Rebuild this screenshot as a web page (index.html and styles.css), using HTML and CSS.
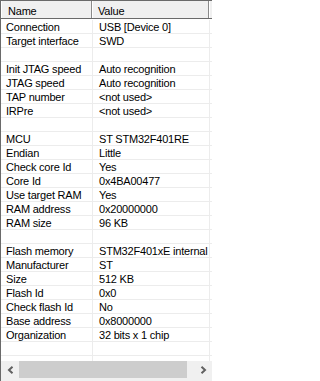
FILE: index.html
```html
<!DOCTYPE html>
<html>
<head>
<meta charset="utf-8">
<link rel="stylesheet" href="styles.css">
</head>
<body>
<div class="frame">
  <div class="table">
    <div class="head">
      <div class="hk">Name</div>
      <div class="hv">Value</div>
      <div class="hx"></div>
    </div>
    <div class="rows">
      <div class="row"><div class="k">Connection</div><div class="v">USB [Device 0]</div><div class="x"></div></div>
      <div class="row"><div class="k">Target interface</div><div class="v">SWD</div><div class="x"></div></div>
      <div class="row"><div class="k"></div><div class="v"></div><div class="x"></div></div>
      <div class="row"><div class="k">Init JTAG speed</div><div class="v">Auto recognition</div><div class="x"></div></div>
      <div class="row"><div class="k">JTAG speed</div><div class="v">Auto recognition</div><div class="x"></div></div>
      <div class="row"><div class="k">TAP number</div><div class="v">&lt;not used&gt;</div><div class="x"></div></div>
      <div class="row"><div class="k">IRPre</div><div class="v">&lt;not used&gt;</div><div class="x"></div></div>
      <div class="row"><div class="k"></div><div class="v"></div><div class="x"></div></div>
      <div class="row"><div class="k">MCU</div><div class="v">ST STM32F401RE</div><div class="x"></div></div>
      <div class="row"><div class="k">Endian</div><div class="v">Little</div><div class="x"></div></div>
      <div class="row"><div class="k">Check core Id</div><div class="v">Yes</div><div class="x"></div></div>
      <div class="row"><div class="k">Core Id</div><div class="v">0x4BA00477</div><div class="x"></div></div>
      <div class="row"><div class="k">Use target RAM</div><div class="v">Yes</div><div class="x"></div></div>
      <div class="row"><div class="k">RAM address</div><div class="v">0x20000000</div><div class="x"></div></div>
      <div class="row"><div class="k">RAM size</div><div class="v">96 KB</div><div class="x"></div></div>
      <div class="row"><div class="k"></div><div class="v"></div><div class="x"></div></div>
      <div class="row"><div class="k">Flash memory</div><div class="v">STM32F401xE internal</div><div class="x"></div></div>
      <div class="row"><div class="k">Manufacturer</div><div class="v">ST</div><div class="x"></div></div>
      <div class="row"><div class="k">Size</div><div class="v">512 KB</div><div class="x"></div></div>
      <div class="row"><div class="k">Flash Id</div><div class="v">0x0</div><div class="x"></div></div>
      <div class="row"><div class="k">Check flash Id</div><div class="v">No</div><div class="x"></div></div>
      <div class="row"><div class="k">Base address</div><div class="v">0x8000000</div><div class="x"></div></div>
      <div class="row"><div class="k">Organization</div><div class="v">32 bits x 1 chip</div><div class="x"></div></div>
      <div class="row"><div class="k"></div><div class="v"></div><div class="x"></div></div>
      <div class="row filler"><div class="k"></div><div class="v"></div><div class="x"></div></div>
    </div>
  </div>
  <div class="hscroll">
    <div class="btn left">
      <svg width="7" height="8" viewBox="0 0 7 8"><polyline points="5.5,0.8 2,4 5.5,7.2" fill="none" stroke="#606060" stroke-width="2"/></svg>
    </div>
    <div class="thumb"></div>
    <div class="track"></div>
    <div class="btn right">
      <svg width="7" height="8" viewBox="0 0 7 8"><polyline points="1.5,0.8 5,4 1.5,7.2" fill="none" stroke="#606060" stroke-width="2"/></svg>
    </div>
  </div>
  <div class="bottom"></div>
</div>
</body>
</html>
```
FILE: styles.css
```css
html, body {
  margin: 0;
  padding: 0;
  background: #ffffff;
}

.frame {
  width: 212px;
  height: 381px;
  display: flex;
  flex-direction: column;
  box-sizing: border-box;
  border-left: 1px solid #6a6a6a;
  font-family: "Liberation Sans", Arial, sans-serif;
  font-size: 11px;
  letter-spacing: -0.2px;
  color: #000000;
  overflow: hidden;
}

.table {
  flex: 1;
  display: flex;
  flex-direction: column;
  min-height: 0;
  overflow: hidden;
}

.head {
  display: flex;
  height: 17px;
  border-top: 1px solid #6a6a6a;
  border-bottom: 1px solid #6a6a6a;
  background: #f0f0f0;
  flex: none;
}

.hk, .hv {
  box-sizing: border-box;
  padding: 5px 0 1px 0;
  line-height: 11px;
  white-space: nowrap;
  overflow: hidden;
}

.hk {
  width: 91px;
  border-left: 1px solid #ffffff;
  border-right: 1px solid #8a8a8a;
  padding-left: 6px;
}

.hv {
  width: 117px;
  border-left: 1px solid #ffffff;
  border-right: 1px solid #8a8a8a;
  padding-left: 5px;
}

.hx {
  flex: 1;
  border-left: 1px solid #ffffff;
}

.rows {
  flex: 1;
  display: flex;
  flex-direction: column;
  border-top: 1px solid #ffffff;
  min-height: 0;
}

.row {
  display: flex;
  height: 14px;
  flex: none;
  box-sizing: border-box;
  border-bottom: 1px solid #ececec;
}

.row.filler {
  flex: 1;
  border-bottom: none;
}

.k, .v {
  box-sizing: border-box;
  padding-top: 2px;
  line-height: 11px;
  white-space: nowrap;
  overflow: hidden;
  border-right: 1px solid #ececec;
}

.k {
  width: 92px;
  padding-left: 5px;
}

.v {
  width: 117px;
  padding-left: 6px;
}

.x {
  flex: 1;
}

.hscroll {
  display: flex;
  height: 17px;
  flex: none;
  background: #f0f0f0;
}

.btn {
  display: flex;
  align-items: center;
  justify-content: center;
  width: 18px;
}

.btn.right {
  width: 17px;
}

.thumb {
  width: 168px;
  background: #cdcdcd;
}

.track {
  flex: 1;
}

.bottom {
  height: 3px;
  flex: none;
  background: #f0f0f0;
}
```
